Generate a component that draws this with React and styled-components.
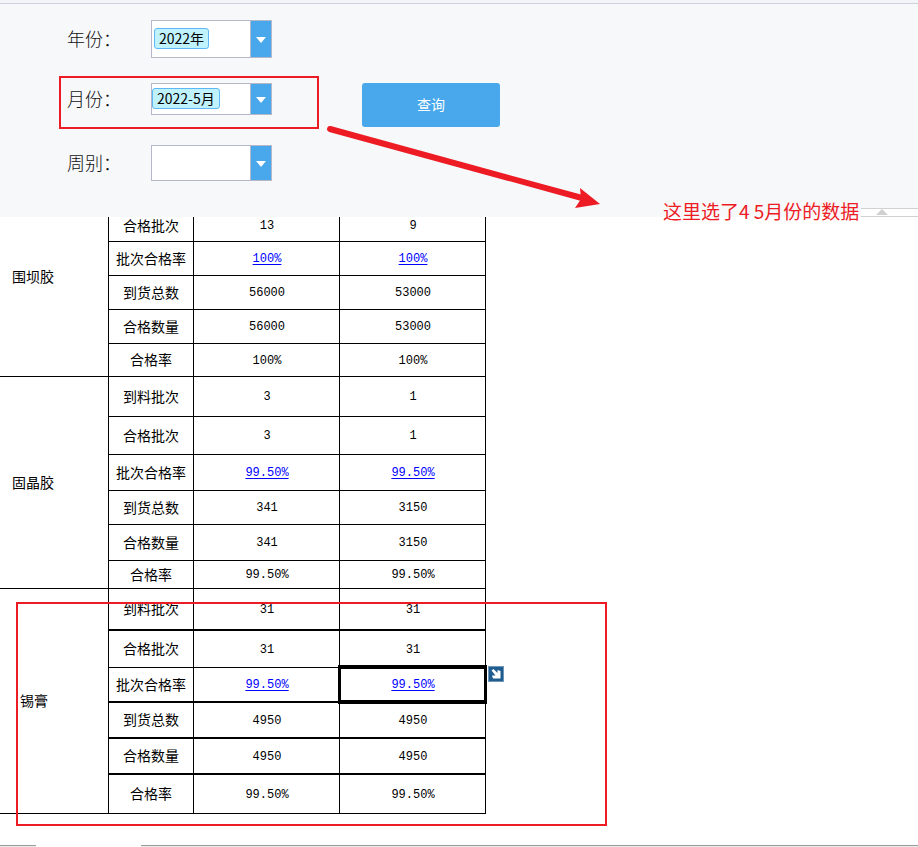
import React, { useRef, useState } from 'react';
import styled, { createGlobalStyle } from 'styled-components';

const GlobalStyle = createGlobalStyle`
  * {
    box-sizing: border-box;
  }
  body {
    margin: 0;
    background-color: white;
    color: black;
    font-family: "Noto Sans CJK SC", sans-serif;
  }
`

const Page = styled.div`
  position: relative;
  display: flex;
  flex-direction: column;
`

const TopStrip = styled.div`
  height: 4px;
  background-color: #f2f4f8;
  border-bottom: 1px solid #cfd2dc;
`

const Filters = styled.form`
  position: relative;
  display: grid;
  grid-template-columns: 84px 121px 138px;
  grid-template-rows: 45px 44px 36px;
  row-gap: 18px;
  align-items: start;
  padding: 16px 0 36px 67px;
  background-color: #f7f8fa;
`

const Label = styled.label`
  grid-column: 1;
  padding-bottom: 2px;
  font-size: 18px;
  font-weight: 300;
  line-height: ${(props) => props.$height - 2}px;
  color: #111;
`

const Combo = styled.div`
  display: flex;
  align-items: center;
  height: ${(props) => props.$height}px;
  padding-left: ${(props) => (props.$flush ? 0 : 2)}px;
  background-color: white;
  border: 1px solid #b4b8c9;
`

const Select = styled.select`
  appearance: none;
  field-sizing: content;
  height: 21px;
  margin-bottom: 2px;
  padding: 0 4px;
  font-family: inherit;
  font-size: 14px;
  line-height: 19px;
  color: black;
  outline: none;
  border: 1px solid ${(props) => (props.$empty ? 'transparent' : '#5eb8f7')};
  border-radius: 3px;
  background-color: ${(props) => (props.$empty ? 'transparent' : '#bff2fd')};
`

const ArrowButton = styled.button`
  display: flex;
  align-items: center;
  justify-content: center;
  align-self: stretch;
  width: 21px;
  margin-left: auto;
  padding: 2px 0 0;
  border: none;
  border-left: 1px solid #b4b8c9;
  background-color: #48a8eb;
`

const QueryButton = styled.button`
  grid-column: 3;
  grid-row: 2;
  height: 44px;
  margin: 0 -90px 0 90px;
  padding: 0 0 2px;
  border: none;
  border-radius: 3px;
  background-color: #48a8eb;
  color: white;
  font-family: inherit;
  font-size: 14px;
`

const Splitter = styled.div`
  position: absolute;
  left: 861px;
  right: 0;
  bottom: 0;
  height: 9px;
  padding-left: 15px;
  background-color: white;
  border-top: 1px solid #d2d2d2;
  border-bottom: 1px solid #d2d2d2;

  svg {
    display: block;
  }
`

const Table = styled.table`
  table-layout: fixed;
  width: 486px;
  border-collapse: separate;
  border-spacing: 0;
  font-size: 14px;
  line-height: 16px;
`

const Group = styled.th`
  padding: 0 0 ${(props) => (props.$cut ? 42 : 2)}px ${(props) => (props.$indent ? 20 : 12)}px;
  border-right: 1px solid black;
  border-bottom: 1px solid black;
  font-weight: normal;
  text-align: left;
`

const Row = styled.tr`
  height: ${(props) => props.$height}px;

  > td,
  > th[scope="row"] {
    border-bottom: ${(props) => (props.$heavy ? 2 : 1)}px solid black;
    vertical-align: ${(props) => (props.$cut ? 'top' : 'middle')};
  }
`

const Name = styled.th`
  padding: 0 0 2px;
  border-right: 1px solid black;
  font-weight: normal;
  text-align: center;
`

const Value = styled.td`
  position: relative;
  padding: 1px 0 0 1px;
  border-right: 1px solid black;
  font-family: "Liberation Mono", monospace;
  font-size: 12px;
  text-align: center;

  a {
    color: #0000ff;
    text-underline-offset: 2px;
  }
`

const Selection = styled.div`
  position: absolute;
  inset: -3px -2px -3px -2px;
  border: solid black;
  border-width: 4px 3px;
  pointer-events: none;
`

const Expand = styled.button`
  position: absolute;
  top: -2px;
  left: 148px;
  width: 16px;
  height: 16px;
  padding: 0;
  border: none;
  background: none;

  svg {
    display: block;
  }
`

const SheetTabs = styled.div`
  display: flex;
  height: 2px;
  margin-top: 31px;
`

const SheetTab = styled.div`
  flex: ${(props) => (props.$grow ? '1' : '0 0 36px')};
  background-color: #ececec;
  border-top: 1px solid #9b9b9b;
`

const ActiveTab = styled.div`
  flex: 0 0 105px;
`

const Mark = styled.div`
  position: absolute;
  left: ${(props) => props.$x}px;
  top: ${(props) => props.$y}px;
  width: ${(props) => props.$w}px;
  height: ${(props) => props.$h}px;
  border: 2px solid #ed1c24;
  pointer-events: none;
`

const Pointer = styled.svg`
  position: absolute;
  left: 320px;
  top: 120px;
  pointer-events: none;
`

const Note = styled.div`
  position: absolute;
  left: 663px;
  top: 199px;
  font-size: 19px;
  line-height: 24px;
  white-space: nowrap;
  color: #ed1c24;
`

const groups = [
  {
    name: '围坝胶',
    cut: true,
    rows: [
      { name: '合格批次', values: ['13', '9'], height: 25, cut: true },
      { name: '批次合格率', values: ['100%', '100%'], height: 34, link: true },
      { name: '到货总数', values: ['56000', '53000'], height: 34 },
      { name: '合格数量', values: ['56000', '53000'], height: 34 },
      { name: '合格率', values: ['100%', '100%'], height: 33 },
    ],
  },
  {
    name: '固晶胶',
    rows: [
      { name: '到料批次', values: ['3', '1'], height: 40 },
      { name: '合格批次', values: ['3', '1'], height: 38 },
      { name: '批次合格率', values: ['99.50%', '99.50%'], height: 36, link: true },
      { name: '到货总数', values: ['341', '3150'], height: 34 },
      { name: '合格数量', values: ['341', '3150'], height: 36 },
      { name: '合格率', values: ['99.50%', '99.50%'], height: 28 },
    ],
  },
  {
    name: '锡膏',
    indent: true,
    rows: [
      { name: '到料批次', values: ['31', '31'], height: 42, heavy: true },
      { name: '合格批次', values: ['31', '31'], height: 37 },
      { name: '批次合格率', values: ['99.50%', '99.50%'], height: 35, heavy: true, link: true, selected: 1 },
      { name: '到货总数', values: ['4950', '4950'], height: 36, heavy: true },
      { name: '合格数量', values: ['4950', '4950'], height: 36, heavy: true },
      { name: '合格率', values: ['99.50%', '99.50%'], height: 39 },
    ],
  },
];

function Field({ id, label, height, options, flush }) {
  const select = useRef(null);
  const [value, setValue] = useState(options[0]);

  return (
    <>
      <Label htmlFor={id} $height={height}>{label}</Label>
      <Combo $height={height} $flush={flush}>
        <Select
          id={id}
          ref={select}
          value={value}
          $empty={value === ''}
          onChange={(e) => setValue(e.target.value)}
        >
          {options.map((option) => <option key={option}>{option}</option>)}
        </Select>
        <ArrowButton type="button" aria-label="展开" onClick={() => select.current.showPicker()}>
          <svg width="10" height="6" viewBox="0 0 10 6"><path d="M0 0H10L5 6Z" fill="white" /></svg>
        </ArrowButton>
      </Combo>
    </>
  );
}

function ExpandIcon() {
  return (
    <svg width="16" height="16" viewBox="0 0 16 16">
      <rect width="16" height="16" fill="#6f97b8" />
      <rect x="1" y="1" width="14" height="14" fill="#1f5c8f" />
      <path d="M3.5 4.5L5.5 3L9.5 7V4L12.5 5V12.5H5L4 9.5H7.5Z" fill="white" />
    </svg>
  );
}

function App() {
  return (
    <Page>
      <GlobalStyle />
      <TopStrip />
      <Filters onSubmit={(e) => e.preventDefault()}>
        <Field id="year" label="年份：" height={38} options={['2022年']} />
        <Field id="month" label="月份：" height={32} options={['2022-5月']} flush />
        <Field id="week" label="周别：" height={36} options={['']} />
        <QueryButton>查询</QueryButton>
        <Splitter>
          <svg width="12" height="7" viewBox="0 0 12 7"><path d="M6 0L12 6H0Z" fill="#d0d0d0" /></svg>
        </Splitter>
      </Filters>

      <Table>
        <colgroup>
          <col width="109" />
          <col width="85" />
          <col width="146" />
          <col width="146" />
        </colgroup>
        {groups.map((group) => (
          <tbody key={group.name}>
            {group.rows.map((row, i) => (
              <Row key={row.name} $height={row.height} $heavy={row.heavy} $cut={row.cut}>
                {i === 0 && (
                  <Group scope="rowgroup" rowSpan={group.rows.length} $cut={group.cut} $indent={group.indent}>
                    {group.name}
                  </Group>
                )}
                <Name scope="row">{row.name}</Name>
                {row.values.map((value, j) => (
                  <Value key={j}>
                    {row.link ? <a href="#detail">{value}</a> : value}
                    {row.selected === j && (
                      <>
                        <Selection />
                        <Expand type="button" aria-label="展开单元格"><ExpandIcon /></Expand>
                      </>
                    )}
                  </Value>
                ))}
              </Row>
            ))}
          </tbody>
        ))}
      </Table>

      <SheetTabs>
        <SheetTab />
        <ActiveTab />
        <SheetTab $grow />
      </SheetTabs>

      <Mark $x={59} $y={76} $w={260} $h={53} />
      <Mark $x={16} $y={602} $w={591} $h={224} />
      <Pointer width="290" height="95" viewBox="0 0 290 95">
        <path d="M10 9L262 78" stroke="#ed1c24" strokeWidth="6" strokeLinecap="round" />
        <path d="M260 68L280 84L255 88L261 79Z" fill="#ed1c24" />
      </Pointer>
      <Note>这里选了4 5月份的数据</Note>
    </Page>
  );
}

export default App;
